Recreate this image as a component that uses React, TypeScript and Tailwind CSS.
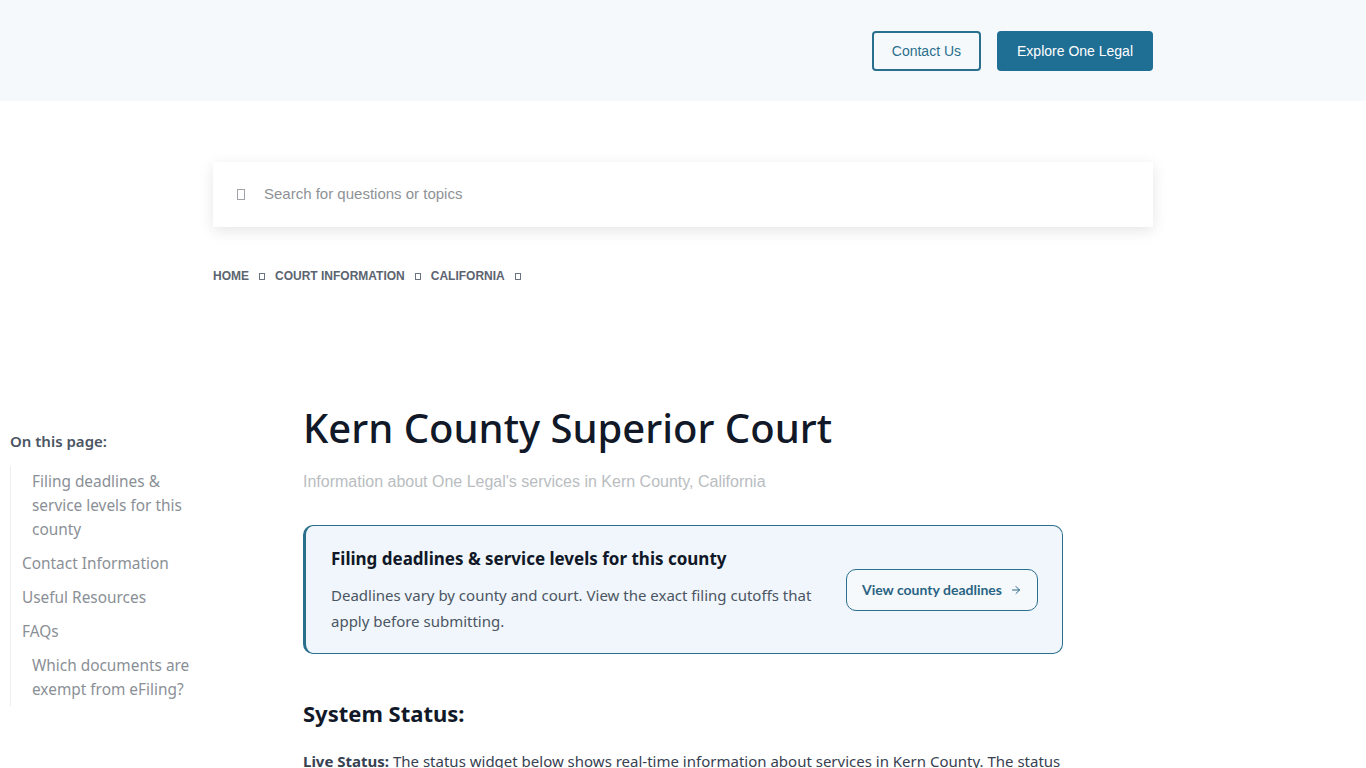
import { ArrowRight } from 'lucide-react'

const sans = "font-['Noto_Sans',sans-serif]"
const arial = "font-['Liberation_Sans',Arial,sans-serif]"

const Glyph = ({ className = '' }: { className?: string }) => (
  <span className={`inline-block border border-current ${className}`} />
)

const crumbs = ['Home', 'Court Information', 'California']

const toc = [
  { label: 'Filing deadlines & service levels for this county', nested: true },
  { label: 'Contact Information', nested: false },
  { label: 'Useful Resources', nested: false },
  { label: 'FAQs', nested: false },
  { label: 'Which documents are exempt from eFiling?', nested: true },
]

const Header = () => (
  <header className={`flex h-[101px] items-center justify-end bg-[#f5f9fc] pr-[213px] ${arial}`}>
    <div className="flex gap-4 pt-[1px]">
      <button className="h-10 rounded-[4px] border-2 border-[#2a6f8c] px-[18px] text-[14px] text-[#2a6f8c]">
        Contact Us
      </button>
      <button className="h-10 rounded-[4px] bg-[#1f6e94] px-5 text-[14px] text-white">
        Explore One Legal
      </button>
    </div>
  </header>
)

const Search = () => (
  <div className={`mx-auto mt-[61px] w-[940px] ${arial}`}>
    <div className="flex h-[65px] items-center gap-[19px] bg-white shadow-[0_4px_14px_rgba(0,0,0,0.1)]">
      <Glyph className="ml-6 h-[11px] w-[8px] text-[#a0a4a8]" />
      <span className="text-[15px] text-[#8e9297]">Search for questions or topics</span>
    </div>
    <nav className="mt-[40px] flex items-center gap-[10px] text-[12px] font-bold uppercase text-[#5b6470]">
      {crumbs.map((c) => (
        <span key={c} className="flex items-center gap-[10px]">
          <span>{c}</span>
          <Glyph className="mt-[1px] h-[7px] w-[6px] text-[#6b7280]" />
        </span>
      ))}
    </nav>
  </div>
)

const Sidebar = () => (
  <aside className={`w-[200px] shrink-0 pl-[10px] pt-[40px] ${sans}`}>
    <p className="text-[15px] font-semibold text-[#4b5563]">On this page:</p>
    <ul className="mt-[13px] flex flex-col gap-[10px] border-l border-[#eceef0] py-1 text-[15.4px] leading-6 text-[#8a8f96]">
      {toc.map((t) => (
        <li key={t.label} className={t.nested ? 'pl-[21px]' : 'pl-[11px]'}>
          {t.label}
        </li>
      ))}
    </ul>
  </aside>
)

const DeadlineCard = () => (
  <div className="mt-[31px] flex w-[760px] items-center justify-between rounded-[10px] border border-l-[3px] border-[#2a6f8c] bg-[#f0f6fb] pb-[19px] pl-[25px] pr-6 pt-[20px]">
    <div className="w-[500px]">
      <h3 className="text-[17px] font-bold text-[#111827]">Filing deadlines &amp; service levels for this county</h3>
      <p className="mt-[10px] text-[15px] leading-[26px] text-[#4b5563]">
        Deadlines vary by county and court. View the exact filing cutoffs that apply before submitting.
      </p>
    </div>
    <button className="flex h-[42px] items-center gap-2 rounded-[10px] border border-[#2a6f8c] bg-white/40 px-[15px] font-['Lato',sans-serif] text-[14px] font-bold text-[#2a6483]">
      View county deadlines
      <ArrowRight size={12} strokeWidth={2} />
    </button>
  </div>
)

const Main = () => (
  <main className={`pt-[10px] ${sans}`}>
    <h1 className="text-[40px] font-medium leading-[56px] text-[#111827]">Kern County Superior Court</h1>
    <p className={`mt-[14px] text-[16px] text-[#b9bdc1] ${arial}`}>
      Information about One Legal's services in Kern County, California
    </p>
    <DeadlineCard />
    <h2 className="mt-[43px] text-[22px] font-bold text-[#111827]">System Status:</h2>
    <p className="mt-[19px] text-[15px] leading-6 text-[#374151]">
      <strong className="text-[#374151]">Live Status:</strong> The status widget below shows real-time information about
      services in Kern County. The status
    </p>
  </main>
)

export default function App() {
  return (
    <div className="min-h-[768px] bg-white">
      <Header />
      <Search />
      <div className="mt-[105px] flex">
        <Sidebar />
        <div className="pl-[103px]">
          <Main />
        </div>
      </div>
    </div>
  )
}
